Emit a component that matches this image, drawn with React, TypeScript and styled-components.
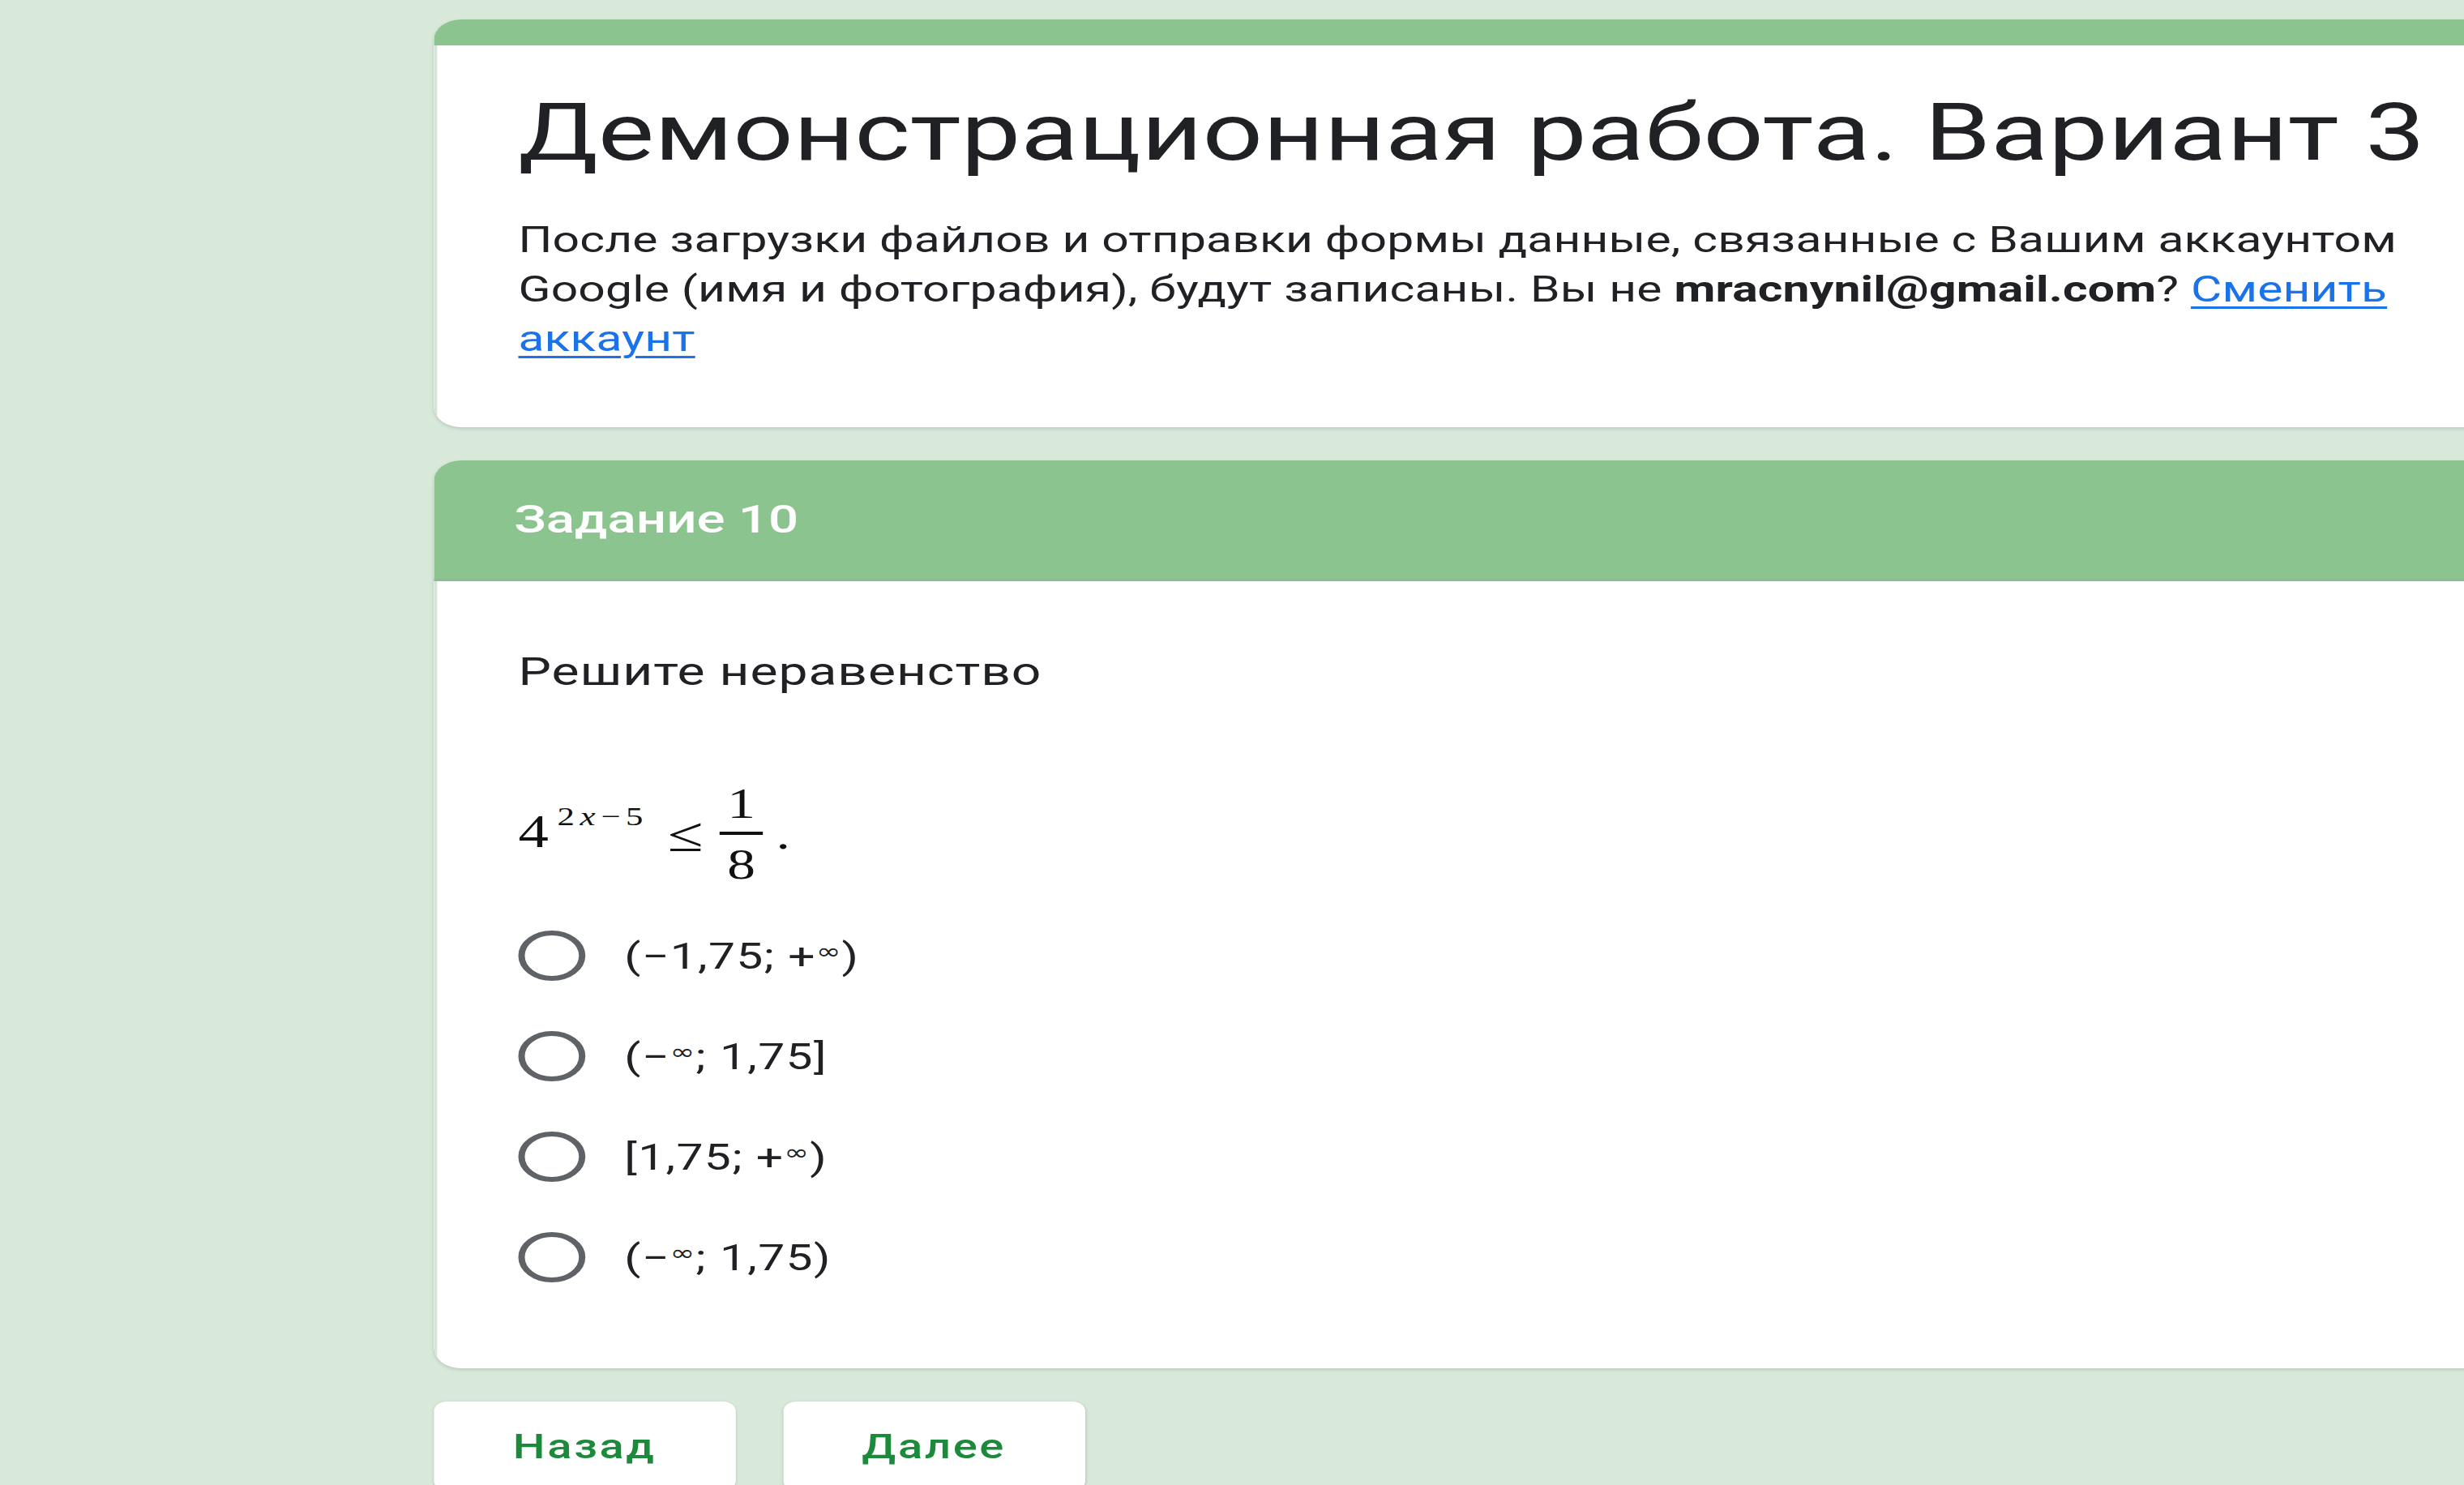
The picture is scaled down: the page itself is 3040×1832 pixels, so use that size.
import React from 'react';
import styled, {createGlobalStyle} from 'styled-components';

// the captured form is shown 1.335x wider than tall, so the page is laid out
// at its own proportions and stretched horizontally once, as a whole
const STRETCH = 1.335

const GlobalStyle = createGlobalStyle`
  html, body {
    margin: 0;
    padding: 0;
    background: #d8e9da;
    overflow: hidden;
  }

  body {
    font-family: Roboto, "Liberation Sans", sans-serif;
    color: #202124;
  }
`

const options = [
    '(−1,75; +∞)',
    '(−∞; 1,75]',
    '[1,75; +∞)',
    '(−∞; 1,75)',
]

const renderAnswer = (text: string) => {
    const parts = text.split('∞')
    return parts.map((part, i) => (
        <React.Fragment key={i}>
            {part}
            {i < parts.length - 1 && <Infinity>∞</Infinity>}
        </React.Fragment>
    ))
}

export default function App() {
    return (
        <>
            <GlobalStyle/>
            <Page>
                <Card>
                    <TopStripe/>
                    <CardBody $top={46} $bottom={78}>
                        <Title>Демонстрационная работа. Вариант 3</Title>
                        <Description>
                            После загрузки файлов и отправки формы данные, связанные с Вашим аккаунтом
                            Google (имя и фотография), будут записаны. Вы не <Email>mracnynil@gmail.com</Email>?{' '}
                            <AccountLink href={'#'}>Сменить аккаунт</AccountLink>
                        </Description>
                    </CardBody>
                </Card>

                <Card>
                    <SectionHeader>
                        <SectionTitle>Задание 10</SectionTitle>
                    </SectionHeader>
                    <CardBody $top={78} $bottom={75}>
                        <Question>Решите неравенство</Question>

                        <Formula>
                            <Power>
                                <Base>4</Base>
                                <Exponent>2<i>x</i>−5</Exponent>
                            </Power>
                            <Relation>≤</Relation>
                            <Fraction>
                                <FracDigit>1</FracDigit>
                                <FracBar/>
                                <FracDigit>8</FracDigit>
                            </Fraction>
                            <Dot>.</Dot>
                        </Formula>

                        <OptionList>
                            {options.map(o => (
                                <Option key={o}>
                                    <Radio/>
                                    <OptionText>{renderAnswer(o)}</OptionText>
                                </Option>
                            ))}
                        </OptionList>
                    </CardBody>
                </Card>

                <Actions>
                    <NavButton>Назад</NavButton>
                    <NavButton>Далее</NavButton>
                </Actions>
            </Page>
        </>
    );
}

const Page = styled.main`
  width: ${3040 / STRETCH}px;
  min-height: 1832px;
  box-sizing: border-box;
  padding: 24px 0 0 401px;
  display: flex;
  flex-direction: column;
  align-items: flex-start;
  gap: 41px;
  transform: scaleX(${STRETCH});
  transform-origin: 0 0;
`

const Card = styled.section`
  width: 1965px;
  background: #fff;
  border-radius: 25px;
  box-shadow: 0 2px 4px rgba(60, 64, 67, 0.18);
  overflow: hidden;
`

const TopStripe = styled.div`
  height: 32px;
  background: #8cc490;
`

const CardBody = styled.div<{ $top: number, $bottom: number }>`
  display: flex;
  flex-direction: column;
  align-items: flex-start;
  padding: ${p => p.$top}px 77px ${p => p.$bottom}px 75px;
  border-left: 3px solid #d4e4d6;
`

const Title = styled.h1`
  margin: 0;
  font-family: Roboto, sans-serif;
  font-weight: 400;
  font-size: 98px;
  line-height: 123px;
  white-space: nowrap;
  color: #202124;
`

const Description = styled.p`
  margin: 41px 0 0;
  font-size: 44px;
  line-height: 61px;
  letter-spacing: 0.14px;
`

const Email = styled.b`
  font-weight: 700;
`

const AccountLink = styled.a`
  color: #1a73e8;
  text-decoration: underline;
  text-decoration-thickness: 3px;
  text-underline-offset: 6px;
`

const SectionHeader = styled.header`
  background: #8cc490;
  padding: 43px 77px 43px 74px;
  border-bottom: 3px solid #93b795;
`

const SectionTitle = styled.h2`
  margin: 0;
  font-weight: 500;
  font-size: 49px;
  line-height: 60px;
  color: #fff;
`

const Question = styled.p`
  margin: 0;
  font-size: 48px;
  line-height: 67px;
  letter-spacing: 0.75px;
`

const Formula = styled.div`
  margin-top: 104px;
  display: flex;
  align-items: center;
  font-family: "Liberation Serif", serif;
  color: #111;
`

const Power = styled.div`
  display: flex;
  align-items: flex-start;
  padding-bottom: 8px;
`

const Base = styled.span`
  font-size: 56px;
  line-height: 56px;
`

const Exponent = styled.span`
  margin: -7px 0 0 8px;
  font-size: 32px;
  line-height: 32px;
  letter-spacing: 5px;
`

const Relation = styled.span`
  margin-left: 18px;
  font-size: 60px;
  line-height: 52px;
`

const Fraction = styled.div`
  margin-left: 15px;
  display: flex;
  flex-direction: column;
  align-items: center;
`

const FracDigit = styled.span`
  font-size: 52px;
  line-height: 52px;
`

const FracBar = styled.span`
  width: 40px;
  height: 4px;
  margin: 8px 0 11px;
  background: #111;
`

const Dot = styled.span`
  margin-left: 12px;
  font-size: 52px;
  line-height: 52px;
`

const OptionList = styled.div`
  margin-top: 24px;
  display: flex;
  flex-direction: column;
`

const Option = styled.label`
  height: 124px;
  display: flex;
  align-items: center;
  gap: 36px;
`

const Radio = styled.span`
  flex-shrink: 0;
  width: 62px;
  height: 62px;
  box-sizing: border-box;
  border: 6px solid #5f6368;
  border-radius: 50%;
`

const OptionText = styled.span`
  font-size: 44px;
  line-height: 46px;
  letter-spacing: 1px;
  padding-bottom: 4px;
  color: #202124;
`

const Infinity = styled.span`
  font-family: "DejaVu Sans", sans-serif;
  font-size: 0.62em;
  vertical-align: 12px;
`

const Actions = styled.div`
  display: flex;
  gap: 44px;
`

const NavButton = styled.button`
  height: 110px;
  padding: 0 73px;
  background: #fff;
  border: none;
  border-radius: 12px;
  box-shadow: 0 1px 3px rgba(60, 64, 67, 0.22);
  font-family: Roboto, sans-serif;
  font-weight: 500;
  font-size: 42px;
  letter-spacing: 2px;
  color: #1b8a3a;
  cursor: pointer;
`
